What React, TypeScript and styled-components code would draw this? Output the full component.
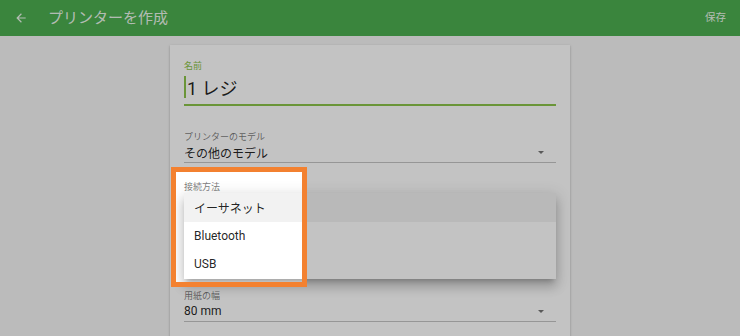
import { FC } from 'react';
import styled, { createGlobalStyle } from 'styled-components';

const colors = {
  green: '#4caf50',
  lightGreen: '#8bc34a',
  page: '#f5f5f5',
  text: 'rgba(0, 0, 0, 0.87)',
  hint: 'rgba(0, 0, 0, 0.54)',
  line: '#c4c4c4',
  orange: '#f38130',
};

const GlobalStyle = createGlobalStyle`
  html, body {
    margin: 0;
    padding: 0;
    background: ${colors.page};
    overflow: hidden;
  }

  body {
    font-family: Roboto, "Noto Sans CJK JP", "Noto Sans", sans-serif;
    -webkit-font-smoothing: antialiased;
  }
`;

const BackIcon: FC = () => (
  <svg width="14" height="14" viewBox="0 0 24 24" fill="currentColor">
    <path d="M20 11H7.83l5.59-5.59L12 4l-8 8 8 8 1.41-1.41L7.83 13H20v-2z" />
  </svg>
);

const connectionOptions = ['イーサネット', 'Bluetooth', 'USB'];

const App: FC = () => (
  <Page>
    <GlobalStyle />
    <Header>
      <BackButton>
        <BackIcon />
      </BackButton>
      <Title>プリンターを作成</Title>
      <SaveButton>保存</SaveButton>
    </Header>

    <Main>
      <Card>
        <Field>
          <Label focused>名前</Label>
          <NameInput>
            <Caret />
            1 レジ
          </NameInput>
          <Underline focused />
        </Field>

        <Field gap={25}>
          <Label>プリンターのモデル</Label>
          <SelectValue>
            その他のモデル
            <Arrow />
          </SelectValue>
          <Underline />
        </Field>

        <Field gap={18}>
          <Label>接続方法</Label>
          {/* value sits under the open menu */}
          <SelectValue hidden>
            イーサネット
            <Arrow />
          </SelectValue>
          <Underline />
          <Menu>
            {connectionOptions.map((option, i) => (
              <MenuItem key={option} selected={i === 0}>
                {option}
              </MenuItem>
            ))}
          </Menu>
        </Field>

        <Field gap={77}>
          <Label>用紙の幅</Label>
          <SelectValue>
            80 mm
            <Arrow />
          </SelectValue>
          <Underline />
        </Field>
      </Card>
    </Main>

    <Spotlight />
  </Page>
);

export default App;

const Page = styled.div`
  position: relative;
  width: 740px;
  height: 336px;
  overflow: hidden;
  background: ${colors.page};
`;

const Header = styled.header`
  display: flex;
  align-items: center;
  height: 36px;
  padding: 0 14px;
  background: ${colors.green};
  color: rgba(255, 255, 255, 0.9);
`;

const BackButton = styled.div`
  display: flex;
  align-items: center;
  width: 14px;
  height: 14px;
  margin-right: 20px;
`;

const Title = styled.h1`
  margin: 0;
  font-size: 15px;
  font-weight: 400;
  line-height: 20px;
`;

const SaveButton = styled.div`
  margin-left: auto;
  font-size: 10.5px;
  line-height: 14px;
`;

const Main = styled.main`
  display: flex;
  justify-content: center;
  padding-top: 9px;
`;

const Card = styled.section`
  width: 372px;
  min-height: 360px;
  padding: 15px 14px;
  background: #fff;
  box-shadow: 0 1px 3px rgba(0, 0, 0, 0.2), 0 1px 1px rgba(0, 0, 0, 0.14);
`;

const Field = styled.div<{ gap?: number }>`
  position: relative;
  display: flex;
  flex-direction: column;
  margin-top: ${({ gap }) => gap ?? 0}px;
`;

const Label = styled.label<{ focused?: boolean }>`
  font-size: 9px;
  line-height: 12px;
  color: ${({ focused }) => (focused ? colors.lightGreen : colors.hint)};
`;

const NameInput = styled.div`
  display: flex;
  align-items: center;
  height: 24px;
  margin-top: 3px;
  margin-bottom: 5px;
  font-size: 18px;
  color: ${colors.text};
`;

const Caret = styled.span`
  width: 2px;
  height: 22px;
  margin-right: 1px;
  background: ${colors.lightGreen};
`;

const SelectValue = styled.div<{ hidden?: boolean }>`
  display: flex;
  align-items: center;
  height: 18px;
  margin-bottom: 1px;
  padding-right: 12px;
  font-size: 12px;
  color: ${colors.text};
  visibility: ${({ hidden }) => (hidden ? 'hidden' : 'visible')};
`;

const Arrow = styled.span`
  margin-left: auto;
  width: 0;
  height: 0;
  border-left: 3px solid transparent;
  border-right: 3px solid transparent;
  border-top: 3px solid rgba(0, 0, 0, 0.54);
`;

const Underline = styled.div<{ focused?: boolean }>`
  height: ${({ focused }) => (focused ? 2 : 1)}px;
  background: ${({ focused }) => (focused ? colors.lightGreen : colors.line)};
`;

const Menu = styled.ul`
  position: absolute;
  top: 12px;
  left: 0;
  right: 0;
  margin: 0;
  padding: 0;
  list-style: none;
  background: #fff;
  box-shadow: 0 5px 5px -3px rgba(0, 0, 0, 0.2), 0 8px 10px 1px rgba(0, 0, 0, 0.14),
    0 3px 14px 2px rgba(0, 0, 0, 0.12);
`;

const MenuItem = styled.li<{ selected?: boolean }>`
  display: flex;
  align-items: center;
  height: 28.5px;
  padding-left: 10px;
  font-size: 12px;
  color: ${colors.text};
  background: ${({ selected }) => (selected ? '#f2f2f2' : '#fff')};
`;

// dims everything except the highlighted region
const Spotlight = styled.div`
  position: absolute;
  left: 171px;
  top: 167px;
  width: 136px;
  height: 120px;
  box-sizing: border-box;
  border: 5px solid ${colors.orange};
  box-shadow: 0 0 0 2000px rgba(0, 0, 0, 0.235);
  pointer-events: none;
`;
